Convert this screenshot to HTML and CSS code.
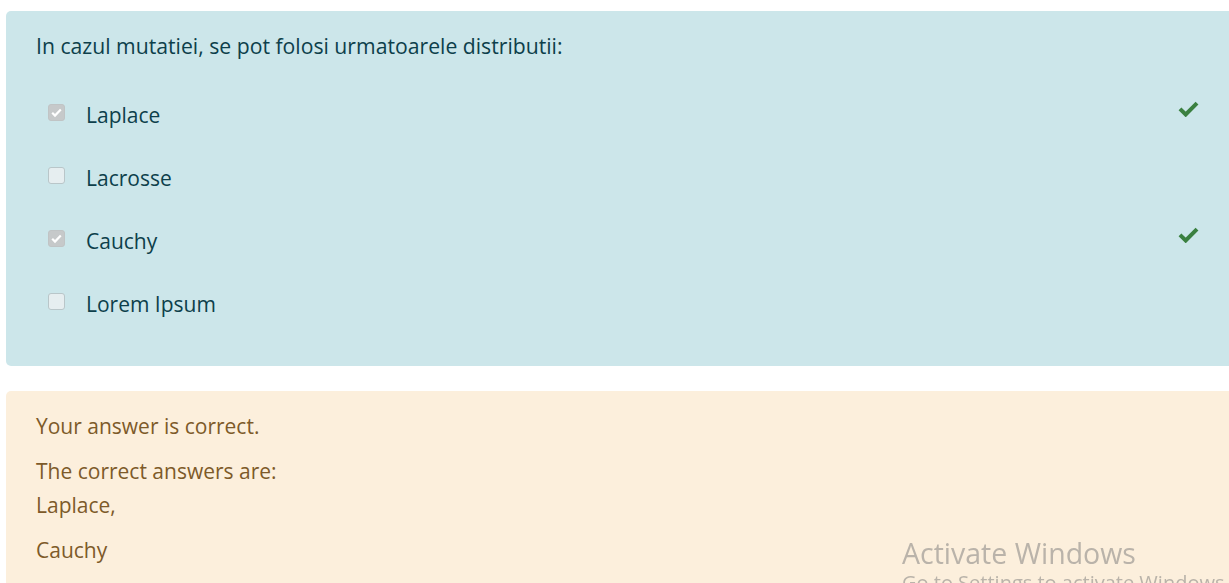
FILE: index.html
```html
<!DOCTYPE html>
<html lang="ro">
<head>
<meta charset="utf-8">
<title>Quiz</title>
<link rel="stylesheet" href="styles.css">
</head>
<body>
<div class="page">
  <div class="formulation">
    <div class="qtext">In cazul mutatiei, se pot folosi urmatoarele distributii:</div>
    <div class="answers">
      <div class="answer">
        <span class="cb checked"><svg viewBox="0 0 17 17" width="17" height="17"><path d="M4.2 8.8l2.8 2.8L12.8 5.6" fill="none" stroke="#fff" stroke-width="2.2"/></svg></span>
        <span class="label">Laplace</span>
        <svg class="ok" viewBox="0 0 21 17" width="21" height="17"><path d="M2 8.8l5.7 5.7L19 3.2" fill="none" stroke="#3a8040" stroke-width="4"/></svg>
      </div>
      <div class="answer">
        <span class="cb"></span>
        <span class="label">Lacrosse</span>
      </div>
      <div class="answer">
        <span class="cb checked"><svg viewBox="0 0 17 17" width="17" height="17"><path d="M4.2 8.8l2.8 2.8L12.8 5.6" fill="none" stroke="#fff" stroke-width="2.2"/></svg></span>
        <span class="label">Cauchy</span>
        <svg class="ok" viewBox="0 0 21 17" width="21" height="17"><path d="M2 8.8l5.7 5.7L19 3.2" fill="none" stroke="#3a8040" stroke-width="4"/></svg>
      </div>
      <div class="answer">
        <span class="cb"></span>
        <span class="label">Lorem Ipsum</span>
      </div>
    </div>
  </div>
  <div class="outcome">
    <p class="feedback">Your answer is correct.</p>
    <p class="right">The correct answers are:<br>Laplace,</p>
    <p class="right">Cauchy</p>
  </div>
</div>
<div class="watermark">
  <div class="wm-title">Activate Windows</div>
  <div class="wm-sub">Go to Settings to activate Windows.</div>
</div>
</body>
</html>
```
FILE: styles.css
```css
html, body {
  margin: 0;
  padding: 0;
  overflow: hidden;
  background: #fff;
}
body {
  font-family: "Open Sans", "Noto Sans", sans-serif;
  font-size: 21px;
}
.page {
  padding: 11px 0 0 6px;
  margin-right: -8px;
}
.formulation {
  background: #cce6ea;
  color: #0d3f4b;
  border-radius: 5px 0 0 5px;
  padding: 31px 38px 31px 30px;
  margin-bottom: 25px;
}
.qtext {
  line-height: 30px;
  margin-top: -11px;
  margin-bottom: 22px;
  font-size: 21.2px;
}
.answer {
  display: flex;
  align-items: center;
  height: 63px;
  padding-left: 12px;
}
.cb {
  width: 17px;
  height: 17px;
  box-sizing: border-box;
  border: 1px solid #b9c6c9;
  border-radius: 3px;
  background: #e6eef0;
  margin-right: 21px;
  margin-top: -4px;
  display: flex;
  align-items: center;
  justify-content: center;
}
.cb.checked {
  background: #c6c9ca;
  border-color: #c0c4c5;
}
.cb svg {
  flex: none;
}
.label {
  flex: 1;
}
.ok {
  margin-top: -12px;
}
.outcome {
  background: #fcefdc;
  color: #7d5a29;
  border-radius: 5px 0 0 5px;
  padding: 18px 30px 20px 30px;
  min-height: 200px;
}
.outcome p {
  margin: 0 0 11px;
  line-height: 34px;
}
.watermark {
  position: fixed;
  left: 902px;
  top: 534px;
  color: rgba(120, 120, 120, 0.5);
  white-space: nowrap;
}
.wm-title {
  font-size: 28.5px;
  line-height: 38px;
}
.wm-sub {
  font-size: 20px;
  line-height: 22px;
}
```
